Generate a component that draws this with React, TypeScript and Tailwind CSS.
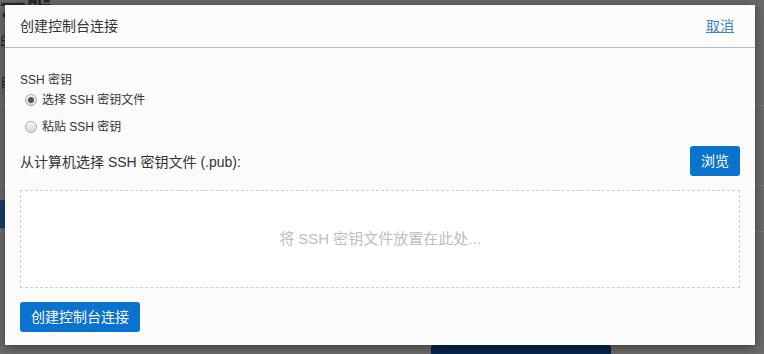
const font = {
  fontFamily: '"Liberation Sans", "Noto Sans CJK SC", sans-serif',
};

const Radio = ({ checked, label }: { checked?: boolean; label: string }) => (
  <label className="flex items-center h-[17px] text-[12px] text-[#333]">
    <span className="ml-[5px] mr-[5px] w-[12px] h-[12px] rounded-full border border-[#a8a8a8] bg-gradient-to-b from-[#f4f4f4] to-[#d8d8d8] flex items-center justify-center shadow-[inset_0_1px_1px_rgba(255,255,255,0.8)]">
      {checked && <span className="w-[6px] h-[6px] rounded-full bg-[#555]" />}
    </span>
    {label}
  </label>
);

export default function App() {
  return (
    <div
      className="relative w-[764px] h-[354px] overflow-hidden bg-[#6b6b6b]"
      style={font}
    >
      {/* page behind the overlay */}
      <div className="flex flex-col text-[#2a2a2a]">
        <div className="h-[22px] text-[26px] font-bold leading-[22px] -mt-[4px]">
          云服
        </div>
        <div className="h-[40px] pt-[14px] text-[14px]">印</div>
        <div className="h-[48px] pt-[14px] text-[14px] border-b border-[#7a7a7a]">
          自
        </div>
        <div className="h-[80px] border-b border-[#7a7a7a]" />
        <div className="h-[14px]" />
        <div className="w-[8px] h-[28px] bg-[#17406a]" />
        <div className="h-[4px] border-b border-[#7a7a7a]" />
        <div className="flex-1" />
      </div>
      <div className="absolute left-[431px] top-[345px] w-[180px] h-[12px] rounded-t-[3px] bg-[#05264a]" />

      {/* modal */}
      <div className="absolute left-[5px] top-[5px] w-[750px] h-[340px] bg-[#fbfbfc] shadow-[0_2px_10px_rgba(0,0,0,0.45)] flex flex-col">
        <div className="h-[43px] flex items-center justify-between px-[15px] border-b border-[#b6b9c4]">
          <span className="text-[14px] text-[#333]">创建控制台连接</span>
          <a className="text-[14px] text-[#3f82d0] underline mr-[6px] cursor-pointer">
            取消
          </a>
        </div>
        <div className="flex flex-col px-[15px] pt-[24px]">
          <div className="text-[12px] text-[#333] h-[17px] leading-[17px]">
            SSH 密钥
          </div>
          <div className="mt-[2px]">
            <Radio checked label="选择 SSH 密钥文件" />
          </div>
          <div className="mt-[10px]">
            <Radio label="粘贴 SSH 密钥" />
          </div>
          <div className="mt-[11px] flex items-center justify-between h-[30px]">
            <span className="text-[14px] text-[#333] mt-[3px]">
              从计算机选择 SSH 密钥文件 (.pub):
            </span>
            <button className="w-[50px] h-[30px] rounded-[3px] bg-[#0a73ce] text-white text-[14px]">
              浏览
            </button>
          </div>
          <div className="mt-[14px] h-[98px] border border-dashed border-[#cfcfd4] bg-white flex items-center justify-center">
            <span className="text-[15px] text-[#bcbec4] mt-[1px]">
              将 SSH 密钥文件放置在此处...
            </span>
          </div>
          <div className="mt-[14px]">
            <button className="w-[120px] h-[30px] rounded-[3px] bg-[#0a73ce] text-white text-[14px]">
              创建控制台连接
            </button>
          </div>
        </div>
      </div>
    </div>
  );
}
